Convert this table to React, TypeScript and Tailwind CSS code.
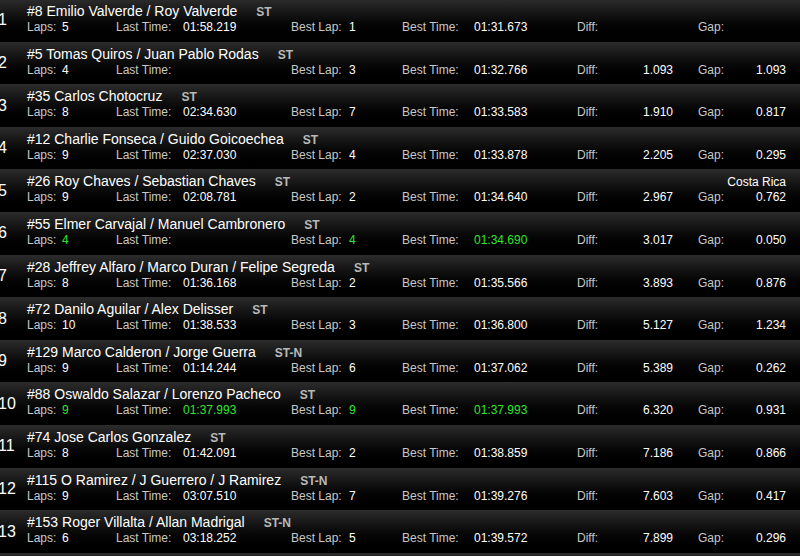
import React from "react";

type Row = {
  pos: number;
  name: string;
  cls: string;
  laps: string;
  last: string;
  bestLap: string;
  bestTime: string;
  diff: string;
  gap: string;
  country?: string;
  greenLaps?: boolean;
  greenLast?: boolean;
  greenBestLap?: boolean;
  greenBestTime?: boolean;
};

const rows: Row[] = [
  { pos: 1, name: "#8 Emilio Valverde / Roy Valverde", cls: "ST", laps: "5", last: "01:58.219", bestLap: "1", bestTime: "01:31.673", diff: "", gap: "" },
  { pos: 2, name: "#5 Tomas Quiros / Juan Pablo Rodas", cls: "ST", laps: "4", last: "", bestLap: "3", bestTime: "01:32.766", diff: "1.093", gap: "1.093" },
  { pos: 3, name: "#35 Carlos Chotocruz", cls: "ST", laps: "8", last: "02:34.630", bestLap: "7", bestTime: "01:33.583", diff: "1.910", gap: "0.817" },
  { pos: 4, name: "#12 Charlie Fonseca / Guido Goicoechea", cls: "ST", laps: "9", last: "02:37.030", bestLap: "4", bestTime: "01:33.878", diff: "2.205", gap: "0.295" },
  { pos: 5, name: "#26 Roy Chaves / Sebastian Chaves", cls: "ST", laps: "9", last: "02:08.781", bestLap: "2", bestTime: "01:34.640", diff: "2.967", gap: "0.762", country: "Costa Rica" },
  { pos: 6, name: "#55 Elmer Carvajal / Manuel Cambronero", cls: "ST", laps: "4", last: "", bestLap: "4", bestTime: "01:34.690", diff: "3.017", gap: "0.050", greenLaps: true, greenBestLap: true, greenBestTime: true },
  { pos: 7, name: "#28 Jeffrey Alfaro / Marco Duran / Felipe Segreda", cls: "ST", laps: "8", last: "01:36.168", bestLap: "2", bestTime: "01:35.566", diff: "3.893", gap: "0.876" },
  { pos: 8, name: "#72 Danilo Aguilar / Alex Delisser", cls: "ST", laps: "10", last: "01:38.533", bestLap: "3", bestTime: "01:36.800", diff: "5.127", gap: "1.234" },
  { pos: 9, name: "#129 Marco Calderon / Jorge Guerra", cls: "ST-N", laps: "9", last: "01:14.244", bestLap: "6", bestTime: "01:37.062", diff: "5.389", gap: "0.262" },
  { pos: 10, name: "#88 Oswaldo Salazar / Lorenzo Pacheco", cls: "ST", laps: "9", last: "01:37.993", bestLap: "9", bestTime: "01:37.993", diff: "6.320", gap: "0.931", greenLaps: true, greenLast: true, greenBestLap: true, greenBestTime: true },
  { pos: 11, name: "#74 Jose Carlos Gonzalez", cls: "ST", laps: "8", last: "01:42.091", bestLap: "2", bestTime: "01:38.859", diff: "7.186", gap: "0.866" },
  { pos: 12, name: "#115 O Ramirez / J Guerrero / J Ramirez", cls: "ST-N", laps: "9", last: "03:07.510", bestLap: "7", bestTime: "01:39.276", diff: "7.603", gap: "0.417" },
  { pos: 13, name: "#153 Roger Villalta / Allan Madrigal", cls: "ST-N", laps: "6", last: "03:18.252", bestLap: "5", bestTime: "01:39.572", diff: "7.899", gap: "0.296" },
];

const val = (green?: boolean) => (green ? "text-[#2ee62e]" : "text-white");

function RowView({ r }: { r: Row }) {
  return (
    <div className="flex h-[42.6px] bg-gradient-to-b from-[#2c2c2c] to-[#000000]">
      <div className="-ml-[2px] flex w-[29px] shrink-0 items-center text-[16px] leading-[18px] text-white">
        {r.pos}
      </div>
      <div className="flex min-w-0 flex-1 flex-col pr-[14px] pt-[4px]">
        <div className="flex h-[16px] items-baseline whitespace-nowrap">
          <span className="text-[14px] leading-[16px] text-white">{r.name}</span>
          <span className="ml-[19px] text-[12px] leading-[16px] font-bold text-[#b9b9b9]">{r.cls}</span>
          {r.country && (
            <span className="ml-auto text-[12px] leading-[16px] text-white">{r.country}</span>
          )}
        </div>
        <div className="mt-[1px] flex h-[14px] items-baseline whitespace-nowrap text-[12px] leading-[14px]">
          <span className="w-[35px] text-[#c8c8c8]">Laps:</span>
          <span className={`w-[54px] ${val(r.greenLaps)}`}>{r.laps}</span>
          <span className="w-[67px] text-[#c8c8c8]">Last Time:</span>
          <span className={`w-[108px] ${val(r.greenLast)}`}>{r.last}</span>
          <span className="w-[58px] text-[#c8c8c8]">Best Lap:</span>
          <span className={`w-[53px] ${val(r.greenBestLap)}`}>{r.bestLap}</span>
          <span className="w-[72px] text-[#c8c8c8]">Best Time:</span>
          <span className={`w-[103px] ${val(r.greenBestTime)}`}>{r.bestTime}</span>
          <span className="flex w-[96px] justify-between">
            <span className="text-[#c8c8c8]">Diff:</span>
            <span className="text-white">{r.diff}</span>
          </span>
          <span className="ml-[25px] flex w-[88px] justify-between">
            <span className="text-[#c8c8c8]">Gap:</span>
            <span className="text-white">{r.gap}</span>
          </span>
        </div>
      </div>
    </div>
  );
}

export default function App() {
  return (
    <div
      className="h-[556px] w-[800px] overflow-hidden bg-black"
      style={{ fontFamily: '"Liberation Sans", Arial, Helvetica, sans-serif' }}
    >
      <div className="-mt-[0.9px] flex flex-col">
        {rows.map((r) => (
          <RowView key={r.pos} r={r} />
        ))}
        <div className="h-[42.6px] bg-gradient-to-b from-[#2c2c2c] to-[#000000]" />
      </div>
    </div>
  );
}
